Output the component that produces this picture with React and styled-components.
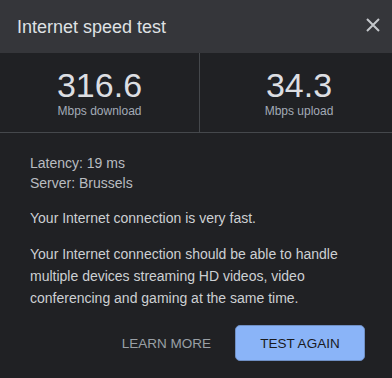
import React from "react";
import styled, { createGlobalStyle } from "styled-components";

const GlobalStyle = createGlobalStyle`
  html, body {
    margin: 0;
    padding: 0;
    background-color: #202124;
  }
  body {
    font-family: "Liberation Sans", Arial, sans-serif;
  }
`;

const stats = [
  { value: "316.6", label: "Mbps download" },
  { value: "34.3", label: "Mbps upload" },
];

export default function App() {
  return (
    <>
      <GlobalStyle />
      <Dialog>
        <Header>
          <Title>Internet speed test</Title>
          <CloseButton aria-label="Close">
            <svg width="14" height="14" viewBox="0 0 14 14">
              <path
                d="M1 1 L13 13 M13 1 L1 13"
                stroke="#c4c7cb"
                strokeWidth="2"
                fill="none"
              />
            </svg>
          </CloseButton>
        </Header>
        <StatsRow>
          {stats.map((s, i) => (
            <StatCell key={s.label} divided={i > 0}>
              <StatValue>{s.value}</StatValue>
              <StatLabel>{s.label}</StatLabel>
            </StatCell>
          ))}
        </StatsRow>
        <Body>
          <Details>
            <DetailLine>Latency: 19 ms</DetailLine>
            <DetailLine>Server: Brussels</DetailLine>
          </Details>
          <Summary>Your Internet connection is very fast.</Summary>
          <Description>
            Your Internet connection should be able to handle multiple devices
            streaming HD videos, video conferencing and gaming at the same time.
          </Description>
          <Actions>
            <TextButton>LEARN MORE</TextButton>
            <PrimaryButton>TEST AGAIN</PrimaryButton>
          </Actions>
        </Body>
      </Dialog>
    </>
  );
}

const Dialog = styled.div`
  width: 392px;
  height: 378px;
  background-color: #202124;
  display: flex;
  flex-direction: column;
`;

const Header = styled.div`
  height: 53px;
  background-color: #35363a;
  display: flex;
  align-items: center;
  justify-content: space-between;
  padding: 2px 12px 0 17px;
  box-sizing: border-box;
`;

const Title = styled.h1`
  margin: 0;
  font-size: 18px;
  font-weight: 400;
  color: #dfe1e4;
`;

const CloseButton = styled.button`
  background: none;
  border: none;
  padding: 0;
  width: 14px;
  height: 14px;
  margin: 0 0 6px 0;
  display: flex;
  cursor: pointer;
`;

const StatsRow = styled.div`
  display: grid;
  grid-template-columns: 199px 1fr;
  height: 80px;
  border-bottom: 1px solid #45484c;
  box-sizing: border-box;
`;

const StatCell = styled.div`
  display: flex;
  flex-direction: column;
  align-items: center;
  justify-content: center;
  padding-top: 2px;
  border-left: ${(p) => (p.divided ? "1px solid #45484c" : "none")};
  padding-left: ${(p) => (p.divided ? "6px" : "0")};
`;

const StatValue = styled.div`
  font-size: 34px;
  line-height: 31px;
  color: #dcdee2;
`;

const StatLabel = styled.div`
  font-size: 12px;
  line-height: 14px;
  margin-top: 3px;
  color: #a3abb7;
`;

const Body = styled.div`
  padding: 20px 30px 0 30px;
  display: flex;
  flex-direction: column;
`;

const Details = styled.div`
  display: flex;
  flex-direction: column;
`;

const DetailLine = styled.div`
  font-size: 14px;
  line-height: 20px;
  color: #b9bcc0;
`;

const Summary = styled.p`
  margin: 15px 0 0 0;
  font-size: 14px;
  line-height: 20px;
  color: #cdd0d3;
`;

const Description = styled.p`
  margin: 15px 0 0 0;
  font-size: 14px;
  line-height: 22px;
  color: #cdd0d3;
`;

const Actions = styled.div`
  display: flex;
  justify-content: flex-end;
  align-items: center;
  margin: 16px -3px 0 0;
`;

const TextButton = styled.button`
  background: none;
  border: none;
  height: 36px;
  padding: 0 24px;
  font-family: "Liberation Sans", Arial, sans-serif;
  font-size: 13.5px;
  color: #9aa0a6;
  cursor: pointer;
`;

const PrimaryButton = styled.button`
  width: 130px;
  height: 36px;
  background-color: #8ab4f8;
  border: 1px solid #6f8fc4;
  border-radius: 5px;
  font-family: "Liberation Sans", Arial, sans-serif;
  font-size: 13.5px;
  color: #1a1b1e;
  cursor: pointer;
`;
